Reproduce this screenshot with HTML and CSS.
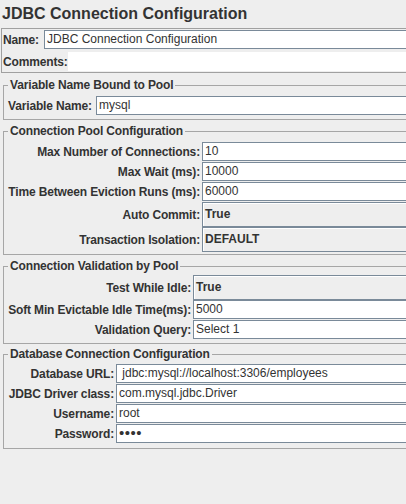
FILE: index.html
```html
<!DOCTYPE html>
<html>
<head>
<meta charset="utf-8">
<link rel="stylesheet" href="styles.css">
</head>
<body>
<div class="page">
  <h1 class="title">JDBC Connection Configuration</h1>

  <div class="name-panel">
    <div class="np-row">
      <span class="np-label np-label-name">Name:</span>
      <div class="field">JDBC Connection Configuration</div>
    </div>
    <div class="np-row np-row-last">
      <span class="np-label np-label-comments">Comments:</span>
      <div class="comment"></div>
    </div>
  </div>

  <fieldset class="group g-var">
    <legend>Variable Name Bound to Pool</legend>
    <div class="form form-var">
      <label>Variable Name:</label><div class="field">mysql</div>
    </div>
  </fieldset>

  <fieldset class="group g-pool">
    <legend>Connection Pool Configuration</legend>
    <div class="form form-pool">
      <label>Max Number of Connections:</label><div class="field">10</div>
      <label>Max Wait (ms):</label><div class="field">10000</div>
      <label>Time Between Eviction Runs (ms):</label><div class="field">60000</div>
      <label>Auto Commit:</label><div class="combo">True</div>
      <label>Transaction Isolation:</label><div class="combo">DEFAULT</div>
    </div>
  </fieldset>

  <fieldset class="group g-valid">
    <legend>Connection Validation by Pool</legend>
    <div class="form form-valid">
      <label>Test While Idle:</label><div class="combo">True</div>
      <label>Soft Min Evictable Idle Time(ms):</label><div class="field">5000</div>
      <label>Validation Query:</label><div class="field">Select 1</div>
    </div>
  </fieldset>

  <fieldset class="group g-db">
    <legend>Database Connection Configuration</legend>
    <div class="form form-db">
      <label>Database URL:</label><div class="field field-url"> jdbc:mysql://localhost:3306/employees</div>
      <label>JDBC Driver class:</label><div class="field">com.mysql.jdbc.Driver</div>
      <label>Username:</label><div class="field">root</div>
      <label>Password:</label><div class="field field-pass">••••</div>
    </div>
  </fieldset>
</div>
</body>
</html>
```

FILE: styles.css
```css
html, body {
  margin: 0;
  padding: 0;
  overflow: hidden;
  background: #eeeeee;
}

body {
  width: 406px;
  height: 504px;
  font-family: "Liberation Sans", Arial, sans-serif;
  font-size: 12px;
  color: #333333;
}

.page {
  width: 420px;
}

.title {
  margin: 0;
  padding: 0 0 0 2px;
  height: 28px;
  line-height: 27px;
  font-size: 16px;
  font-weight: bold;
  color: #333333;
}

.name-panel {
  margin-left: 1px;
  border: 1px solid #a0a0a0;
}

.np-row {
  display: flex;
  align-items: center;
  height: 21px;
}

.np-row-last {
  height: 22px;
  align-items: flex-end;
}

.np-row-last .np-label {
  padding-bottom: 3px;
}

.np-label {
  font-weight: bold;
  letter-spacing: -0.15px;
  padding-left: 1px;
  box-sizing: border-box;
  flex: none;
  white-space: nowrap;
  line-height: 14px;
}

.np-label-name {
  width: 42px;
}

.np-label-comments {
  width: 66px;
}

.field {
  box-sizing: border-box;
  height: 19px;
  line-height: 17px;
  background: #ffffff;
  border: 1px solid #7a8a99;
  padding-left: 2px;
  white-space: pre;
  overflow: hidden;
  flex: 1;
  color: #333333;
}

.comment {
  flex: 1;
  height: 19px;
  margin-bottom: 1px;
  background: #ffffff;
}

.combo {
  box-sizing: border-box;
  height: 25px;
  line-height: 23px;
  background: #eeeeee;
  border: 1px solid #7a8a99;
  box-shadow: inset 1px 1px 0 #ffffff;
  padding-left: 2px;
  font-weight: bold;
  white-space: nowrap;
}

.field-pass {
  font-size: 15px;
  letter-spacing: 0.5px;
  line-height: 16px;
}

.group {
  margin: 4px 0 0 3px;
  padding: 0 0 3px 4px;
  border: 1px solid #a6a6a6;
  min-width: 0;
}

.group legend {
  padding: 0 2px;
  font-weight: bold;
  font-size: 12px;
  line-height: 14px;
  letter-spacing: -0.15px;
  color: #333333;
}

.form {
  display: grid;
  column-gap: 2px;
  row-gap: 0;
  align-items: center;
}

.form .field {
  margin-bottom: 1px;
}

.form label {
  display: flex;
  justify-content: flex-end;
  font-weight: bold;
  letter-spacing: -0.15px;
  white-space: nowrap;
  line-height: 14px;
}

.g-var {
  margin-top: 5px;
}

.form-var {
  grid-template-columns: 86px 1fr;
  padding-top: 4px;
}

.form-var label {
  justify-content: flex-start;
}

.g-pool {
  margin-top: 4px;
  padding-bottom: 2px;
}

.form-pool {
  grid-template-columns: 192px 1fr;
  padding-top: 4px;
}

.g-valid {
  margin-top: 4px;
  padding-bottom: 3px;
}

.form-valid {
  grid-template-columns: 183px 1fr;
  padding-top: 2px;
}

.g-db {
  margin-top: 3px;
  padding-bottom: 4px;
}

.form-db {
  grid-template-columns: 106px 1fr;
  padding-top: 3px;
}
```
